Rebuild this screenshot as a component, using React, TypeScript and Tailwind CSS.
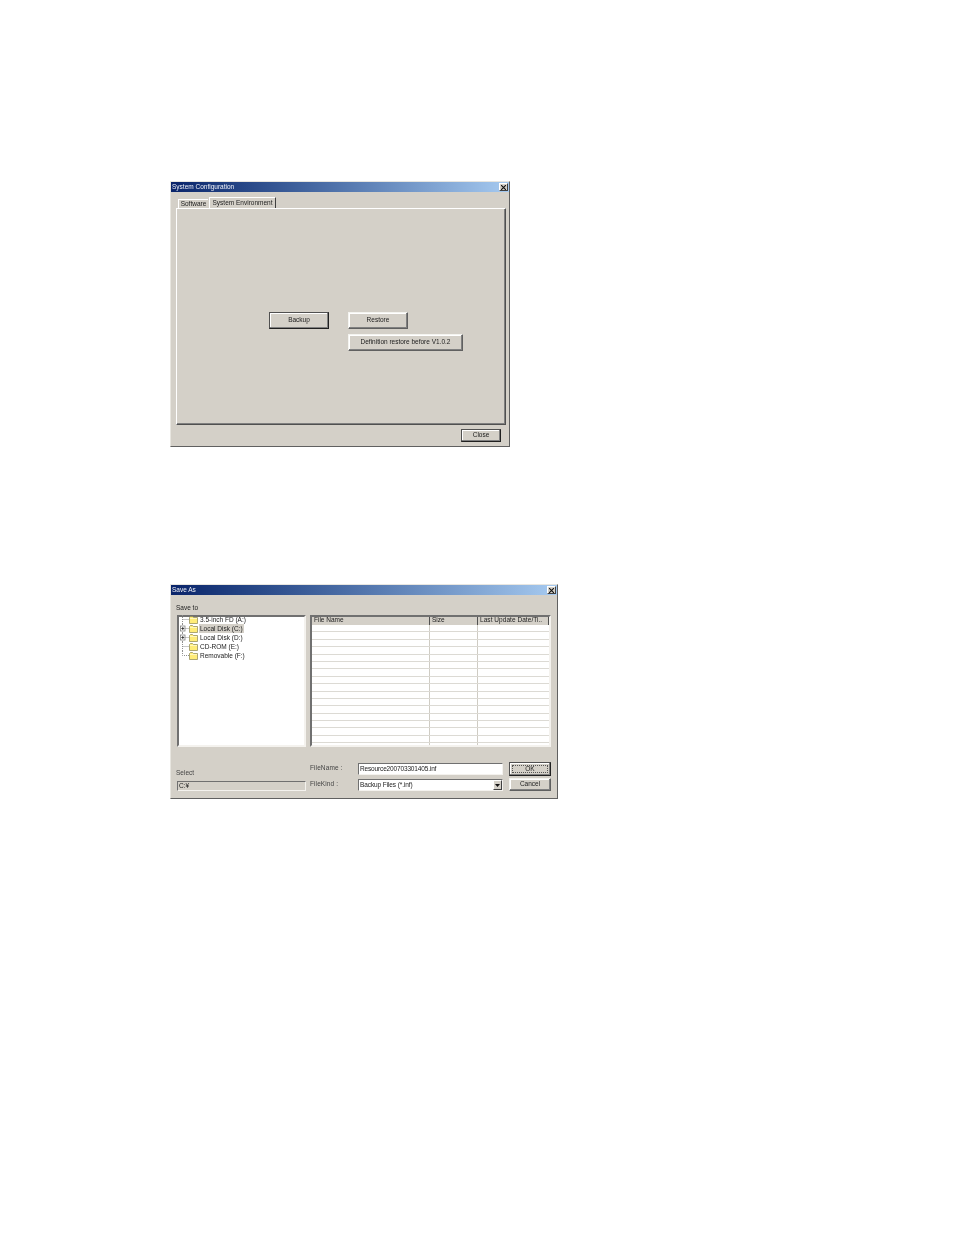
const FONT = "font-['Liberation_Sans',Arial,sans-serif]";

const raised =
  "border border-t-white border-l-white border-r-[#404040] border-b-[#404040] bg-[#d4d0c8]";
const sunken =
  "border border-t-[#707070] border-l-[#707070] border-r-[#f4f2ee] border-b-[#f4f2ee]";

function TitleBar({ title }: { title: string }) {
  return (
    <div className="flex h-[10px] items-center justify-between bg-gradient-to-r from-[#0a246a] to-[#a6caf0] pl-[1px] pr-[1px]">
      <span className="text-[6.5px] leading-[10px] text-[#f0f2f8]">{title}</span>
      <div className={`flex h-[8px] w-[9px] items-center justify-center ${raised}`}>
        <svg width="5" height="5" viewBox="0 0 5 5">
          <path d="M0 0L5 5M5 0L0 5" stroke="#111" strokeWidth="1.1" />
        </svg>
      </div>
    </div>
  );
}

function Button({
  label,
  className,
  strong,
  focus,
}: {
  label: string;
  className: string;
  strong?: boolean;
  focus?: boolean;
}) {
  return (
    <div
      className={`relative flex items-center justify-center border pb-[1px] text-[6.5px] text-[#222] shadow-[inset_-1px_-1px_0_#808080,inset_1px_1px_0_#fff] ${
        strong
          ? "border-[#505050] border-r-[#202020] border-b-[#202020]"
          : "border-t-[#f4f4f0] border-l-[#f4f4f0] border-b-[#606060] border-r-[#606060]"
      } ${className}`}
    >
      {label}
      {focus && <div className="absolute inset-[2px] border border-dotted border-[#555]" />}
    </div>
  );
}

function Connector({ plus, last }: { plus?: boolean; last?: boolean }) {
  return (
    <svg width="9" height="9" viewBox="0 0 9 9" className="shrink-0">
      <path
        d={last ? "M2.5 0V4.5H9" : "M2.5 0V9M2.5 4.5H9"}
        stroke="#909090"
        strokeWidth="1"
        strokeDasharray="1 1"
        fill="none"
      />
      {plus && (
        <>
          <rect x="0.5" y="2" width="4.5" height="5" fill="#fff" stroke="#808080" strokeWidth="0.8" />
          <path d="M1.3 4.5H4.2M2.75 3V6" stroke="#222" strokeWidth="0.8" />
        </>
      )}
    </svg>
  );
}

function Folder() {
  return (
    <svg width="9" height="8" viewBox="0 0 9 8" className="shrink-0">
      <path d="M0.5 7.5V1.5L1.5 .5H3.5L4.5 1.5H8.5V7.5Z" fill="#ffec78" stroke="#8a8450" strokeWidth="0.7" />
      <path d="M1 2.5H8" stroke="#fffbd0" strokeWidth="0.8" />
    </svg>
  );
}

const drives = [
  { label: "3.5-inch FD (A:)" },
  { label: "Local Disk (C:)", plus: true, selected: true },
  { label: "Local Disk (D:)", plus: true },
  { label: "CD-ROM (E:)" },
  { label: "Removable (F:)", last: true },
];

function TreeRow({ label, plus, selected, last }: { label: string; plus?: boolean; selected?: boolean; last?: boolean }) {
  return (
    <div className="flex h-[9px] items-center">
      <Connector plus={plus} last={last} />
      <Folder />
      <span
        className={`ml-[1px] pl-[1px] pr-[1px] text-[6.5px] leading-[9px] text-[#222] ${
          selected ? "bg-[#d4d0c8]" : ""
        }`}
      >
        {label}
      </span>
    </div>
  );
}

function HeaderCell({ label, className }: { label: string; className: string }) {
  return (
    <div
      className={`flex h-[8px] shrink-0 items-center overflow-hidden border-r border-r-[#505050] pb-[2px] pl-[2px] text-[6.5px] whitespace-nowrap text-[#222] ${className}`}
    >
      {label}
    </div>
  );
}

function ListRow() {
  return (
    <div className="flex h-[7.4px] shrink-0 border-b border-b-[#dcdad4]">
      <div className="w-[118px] border-r border-r-[#cfccc4]" />
      <div className="w-[48px] border-r border-r-[#cfccc4]" />
      <div className="flex-1" />
    </div>
  );
}

function SystemConfigDialog() {
  return (
    <div className="flex h-[266px] w-[340px] flex-col border border-t-[#e8e6e0] border-l-[#e8e6e0] border-r-[#606060] border-b-[#606060] bg-[#d4d0c8]">
      <TitleBar title="System Configuration" />
      <div className="flex flex-1 flex-col px-[5px] pt-[5px]">
        <div className="flex h-[11px] items-end gap-[1px] pl-[2px]">
          <div className="flex h-[9px] w-[30px] items-center justify-center border-t border-l border-t-white border-l-white text-[6.5px] text-[#222]">
            Software
          </div>
          <div className="flex h-[11px] w-[67px] items-center justify-center border-t border-l border-r border-t-white border-l-white border-r-[#404040] text-[6.5px] text-[#222]">
            System Environment
          </div>
        </div>
        <div className="flex h-[217px] w-[330px] flex-col border border-t-white border-l-white border-r-[#505050] border-b-[#505050] shadow-[inset_-1px_-1px_0_#808080]">
          <div className="ml-[92px] mt-[103px] flex gap-[19px]">
            <Button label="Backup" strong className="h-[17px] w-[60px]" />
            <Button label="Restore" className="h-[17px] w-[60px]" />
          </div>
          <Button label="Definition restore before V1.0.2" className="ml-[171px] mt-[5px] h-[17px] w-[115px]" />
        </div>
        <div className="mt-[4px] flex justify-end pr-[3px]">
          <Button label="Close" strong className="h-[13px] w-[40px]" />
        </div>
      </div>
    </div>
  );
}

function SaveAsDialog() {
  return (
    <div className="flex h-[215px] w-[388px] flex-col border border-t-[#e8e6e0] border-l-[#e8e6e0] border-r-[#606060] border-b-[#606060] bg-[#d4d0c8]">
      <TitleBar title="Save As" />
      <div className="flex flex-1 flex-col pl-[5px]">
        <div className="mt-[8px] h-[12px] text-[6.5px] leading-[9px] text-[#222]">Save to</div>
        <div className="flex gap-[4px] pl-[1px]">
          <div className={`h-[132px] w-[129px] border-2 bg-white pl-[1px] ${sunken}`}>
            <div className="-mt-[2px]">
              {drives.map((d) => (
                <TreeRow key={d.label} {...d} />
              ))}
            </div>
          </div>
          <div className={`flex h-[132px] w-[241px] flex-col overflow-hidden border-2 bg-white ${sunken}`}>
            <div className="flex shrink-0 bg-[#d4d0c8]">
              <HeaderCell label="File Name" className="w-[118px]" />
              <HeaderCell label="Size" className="w-[48px]" />
              <HeaderCell label="Last Update Date/Ti.." className="flex-1 tracking-[0.05px]" />
            </div>
            {Array.from({ length: 17 }).map((_, i) => (
              <ListRow key={i} />
            ))}
          </div>
        </div>
        <div className="mt-[15px] flex">
          <div className="flex w-[130px] flex-col pt-[6px]">
            <span className="h-[9px] text-[6.5px] leading-[9px] text-[#444]">Select</span>
            <div className={`ml-[1px] mt-[4px] h-[10px] border bg-[#d4d0c8] pl-[1px] text-[6.5px] leading-[8px] text-[#222] ${sunken}`}>
              C:¥
            </div>
          </div>
          <div className="ml-[4px] flex w-[48px] flex-col pt-[1px] text-[6.5px] tracking-[0.1px] text-[#444]">
            <span className="h-[16px] leading-[9px]">FileName :</span>
            <span className="leading-[9px]">FileKind :</span>
          </div>
          <div className="mt-[1px] flex w-[145px] flex-col gap-[4px]">
            <div className={`h-[12px] border bg-white pl-[1px] text-[6.5px] leading-[10px] tracking-[-0.15px] text-[#222] ${sunken}`}>
              Resource200703301405.inf
            </div>
            <div className={`flex h-[12px] items-center justify-between border bg-white pl-[1px] text-[6.5px] tracking-[-0.1px] text-[#222] ${sunken}`}>
              <span>Backup Files (*.inf)</span>
              <div className={`flex h-[10px] w-[9px] items-center justify-center ${raised}`}>
                <svg width="5" height="3" viewBox="0 0 5 3">
                  <path d="M0 0H5L2.5 3Z" fill="#111" />
                </svg>
              </div>
            </div>
          </div>
          <div className="ml-[6px] flex w-[42px] flex-col gap-[2px]">
            <Button label="OK" strong focus className="h-[14px] w-[42px]" />
            <Button label="Cancel" className="h-[13px] w-[42px]" />
          </div>
        </div>
      </div>
    </div>
  );
}

export default function App() {
  return (
    <div className={`flex min-h-[1235px] w-[954px] flex-col gap-[137px] bg-white pl-[170px] pt-[181px] blur-[0.3px] ${FONT}`}>
      <SystemConfigDialog />
      <SaveAsDialog />
    </div>
  );
}
